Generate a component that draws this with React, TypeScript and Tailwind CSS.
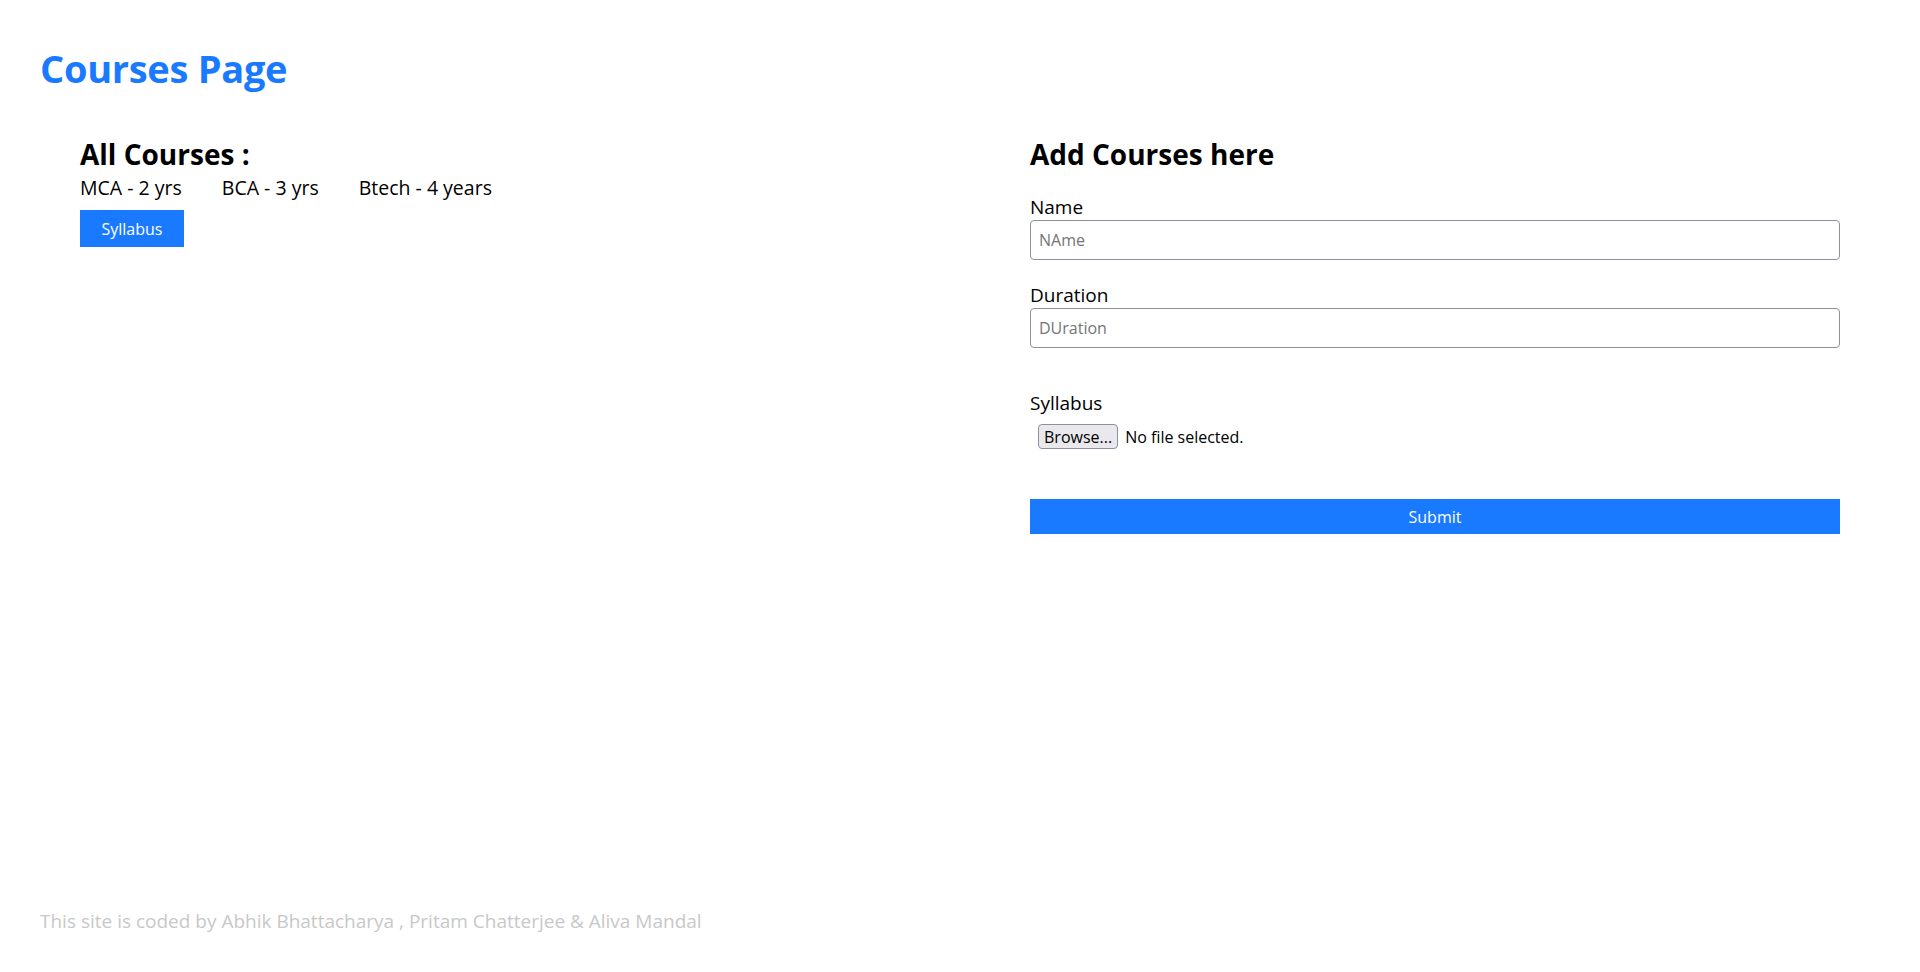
import React from "react";

const font = { fontFamily: '"Open Sans", "Noto Sans", sans-serif' };

export default function App() {
  return (
    <div
      className="min-h-screen flex flex-col bg-white px-[40px] pt-[44px] text-black"
      style={font}
    >
      <h1 className="text-[38px] font-bold leading-[48px] tracking-[-0.3px] text-[#1a7aff]">
        Courses Page
      </h1>

      <div className="mt-[45px] grid grid-cols-[810px_810px] gap-x-[140px] px-[40px]">
        <div className="flex flex-col items-start">
          <h2 className="text-[28px] font-bold leading-[34px]">All Courses :</h2>
          <div className="mt-[5px] flex gap-x-[40px] text-[19.5px] leading-[24px]">
            <span>MCA - 2 yrs</span>
            <span>BCA - 3 yrs</span>
            <span>Btech - 4 years</span>
          </div>
          <button className="mt-[10px] h-[37px] w-[104px] bg-[#1a7aff] text-[16px] text-white">
            Syllabus
          </button>
        </div>

        <div className="flex flex-col">
          <h2 className="text-[28px] font-bold leading-[34px]">Add Courses here</h2>
          <label className="mt-[24px] text-[19px] leading-[24px]">Name</label>
          <input
            placeholder="NAme"
            className="mt-[1px] h-[40px] w-full rounded-[4px] border border-[#8f8f9d] px-[8px] text-[16px] placeholder:text-[#757575] outline-none"
          />
          <label className="mt-[23px] text-[19px] leading-[24px]">Duration</label>
          <input
            placeholder="DUration"
            className="mt-[1px] h-[40px] w-full rounded-[4px] border border-[#8f8f9d] px-[8px] text-[16px] placeholder:text-[#757575] outline-none"
          />
          <label className="mt-[43px] text-[19px] leading-[24px]">Syllabus</label>
          <div className="mt-[9px] ml-[8px] flex items-center gap-x-[7px]">
            <button className="h-[25px] rounded-[4px] border border-[#8f8f9d] bg-[#e9e9ed] px-[5px] text-[16px] leading-[20px]">
              Browse...
            </button>
            <span className="text-[16px]">No file selected.</span>
          </div>
          <button className="mt-[50px] h-[35px] w-full bg-[#1a7aff] text-[16px] text-white">
            Submit
          </button>
        </div>
      </div>

      <footer className="mt-auto pb-[39px] text-[19px] leading-[24px] text-[#c8c8c8]">
        This site is coded by Abhik Bhattacharya , Pritam Chatterjee &amp; Aliva Mandal
      </footer>
    </div>
  );
}
